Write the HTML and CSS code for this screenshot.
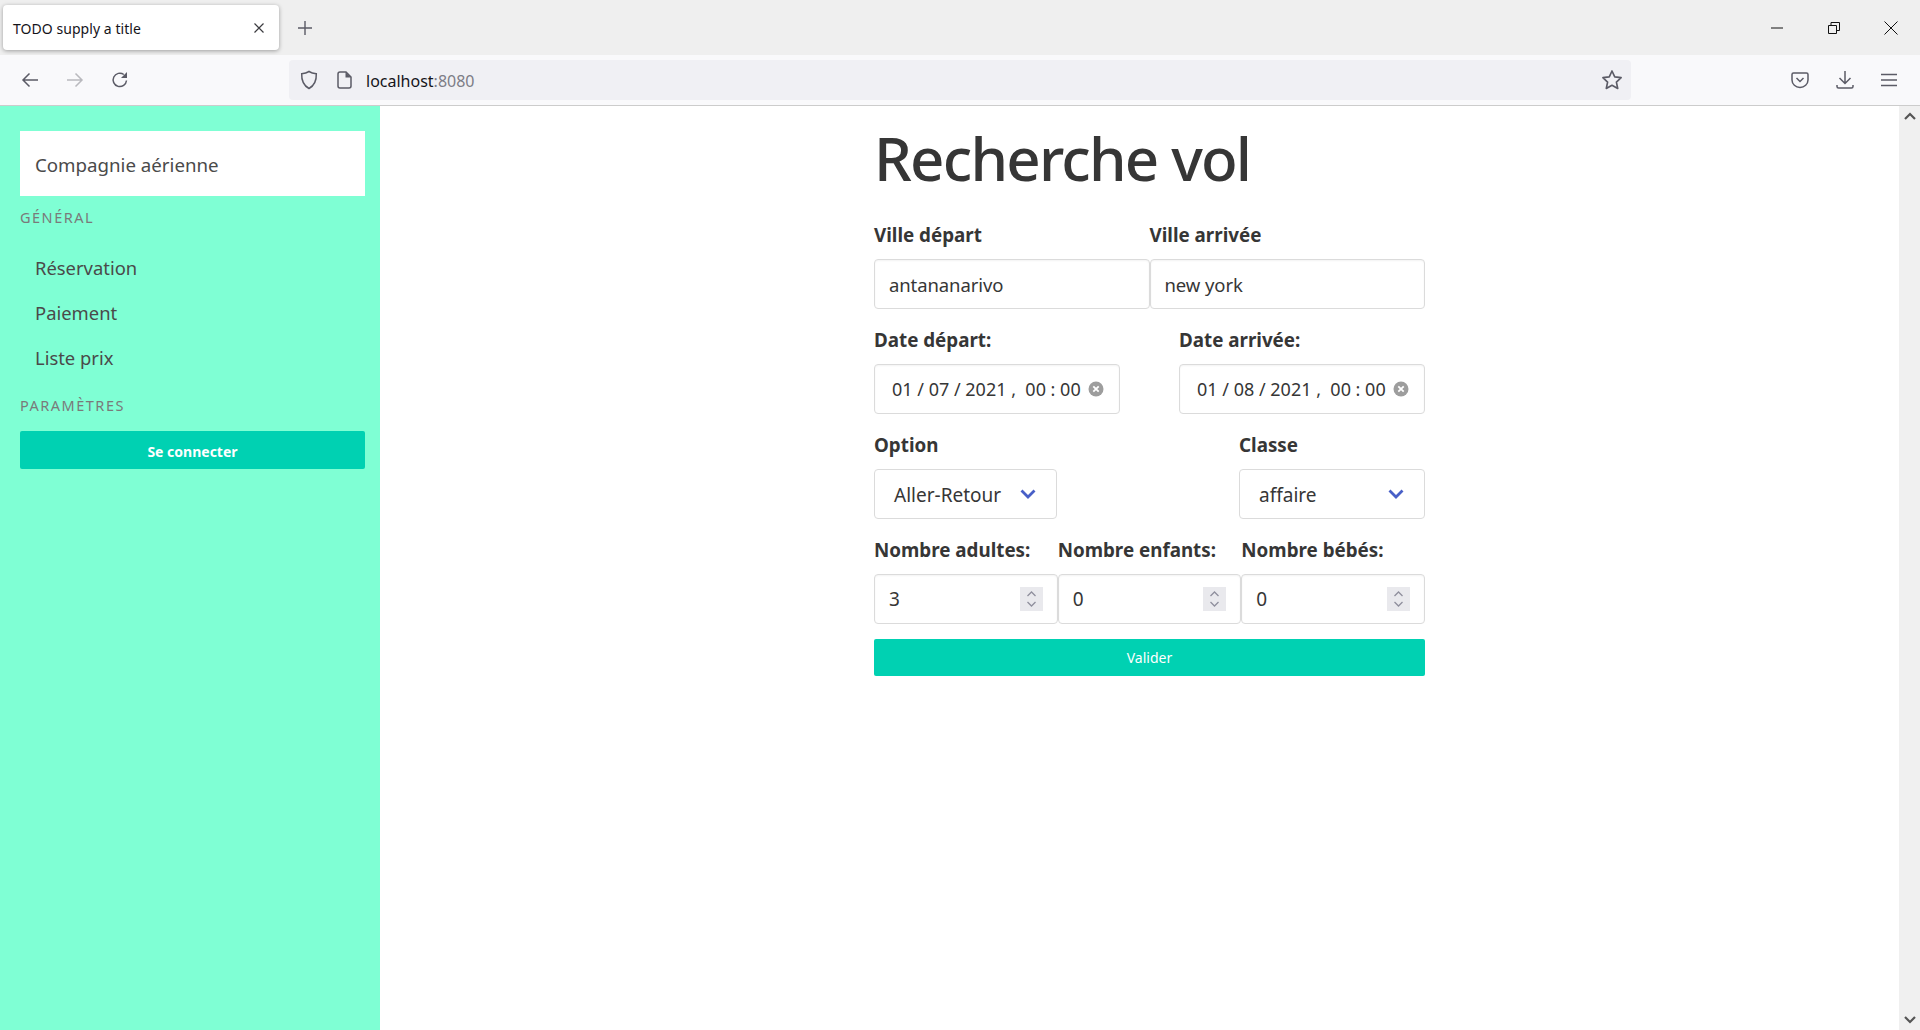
FILE: index.html
```html
<!DOCTYPE html>
<html lang="fr">
<head>
    <meta charset="UTF-8">
    <title>TODO supply a title</title>
    <link rel="stylesheet" href="styles.css">
</head>
<body>
    <div class="tabbar">
        <div class="tab">
            <span class="tab-title">TODO supply a title</span>
            <svg class="tab-close" width="12" height="12" viewBox="0 0 12 12"><path d="M1.500 1.500l9 9M10.500 1.500l-9 9" stroke="#3c3c40" stroke-width="1.200" fill="none"/></svg>
        </div>
        <svg class="new-tab" width="16" height="16" viewBox="0 0 16 16"><path d="M8 1v14M1 8h14" stroke="#5b5b66" stroke-width="1.400" fill="none"/></svg>
        <div class="win-buttons">
            <svg width="14" height="14" viewBox="0 0 14 14"><path d="M1 7h12" stroke="#111" stroke-width="1" fill="none"/></svg>
            <svg width="14" height="14" viewBox="0 0 14 14"><path d="M1.500 4.500h8v8h-8zM4 4.500V1.500h8.500v8h-3" stroke="#111" stroke-width="1" fill="none"/></svg>
            <svg width="14" height="14" viewBox="0 0 14 14"><path d="M.5.5l13 13M13.500.5l-13 13" stroke="#111" stroke-width="1" fill="none"/></svg>
        </div>
    </div>

    <div class="toolbar">
        <div class="nav-buttons">
            <svg width="18" height="16" viewBox="0 0 18 16"><path d="M17 8H2M8.500 1.500L2 8l6.500 6.500" stroke="#5b5b66" stroke-width="1.500" fill="none"/></svg>
            <svg width="18" height="16" viewBox="0 0 18 16"><path d="M1 8h15M9.500 1.500L16 8l-6.500 6.500" stroke="#b9b9be" stroke-width="1.500" fill="none"/></svg>
            <svg width="18" height="18" viewBox="0 0 18 18"><path d="M15.500 9.500A6.700 6.700 0 1 1 12.800 3.500" stroke="#5b5b66" stroke-width="1.500" fill="none"/><path d="M16 1v6h-6z" fill="#5b5b66"/></svg>
        </div>
        <div class="urlbar">
            <svg class="shield" width="18" height="20" viewBox="0 0 18 20"><path d="M9 1.500c2 1.300 4.500 2 7.300 2.200.3 6.500-2 11.800-7.300 14.800C3.700 15.500 1.400 10.200 1.700 3.700 4.500 3.500 7 2.800 9 1.500z" stroke="#5b5b66" stroke-width="1.500" fill="none"/></svg>
            <svg class="page" width="15" height="18" viewBox="0 0 15 18"><path d="M3 1h6l5 5v9a2 2 0 0 1-2 2H3a2 2 0 0 1-2-2V3a2 2 0 0 1 2-2z" stroke="#5b5b66" stroke-width="1.500" fill="none"/><path d="M8.500 1v5.500H14z" fill="#5b5b66"/></svg>
            <span class="url">localhost<span class="url-port">:8080</span></span>
            <svg class="star" width="22" height="22" viewBox="0 0 20 20"><path d="M10 1.800l2.500 5.400 5.800.7-4.300 4 1.200 5.800-5.200-2.900-5.200 2.900 1.200-5.800-4.300-4 5.800-.7z" stroke="#5b5b66" stroke-width="1.500" stroke-linejoin="round" fill="none"/></svg>
        </div>
        <div class="tool-buttons">
            <svg width="18" height="18" viewBox="0 0 18 18"><path d="M2.500 2h13A1.500 1.500 0 0 1 17 3.500V9a8 7.500 0 0 1-16 0V3.500A1.500 1.500 0 0 1 2.500 2z" stroke="#5b5b66" stroke-width="1.500" fill="none"/><path d="M5.500 7L9 10.500 12.500 7" stroke="#5b5b66" stroke-width="1.500" fill="none"/></svg>
            <svg width="18" height="20" viewBox="0 0 18 20"><path d="M9 1v12M3.500 8L9 13.500 14.500 8M1 15v1.500A1.500 1.500 0 0 0 2.500 18h13a1.500 1.500 0 0 0 1.500-1.500V15" stroke="#5b5b66" stroke-width="1.500" fill="none"/></svg>
            <svg width="16" height="14" viewBox="0 0 16 14"><path d="M0 1.500h16M0 7h16M0 12.500h16" stroke="#5b5b66" stroke-width="1.500" fill="none"/></svg>
        </div>
    </div>

    <div class="page-area">
        <aside class="sidebar">
            <div class="brand">Compagnie aérienne</div>
            <p class="menu-label menu-label-first">Général</p>
            <ul class="menu-list">
                <li>Réservation</li>
                <li>Paiement</li>
                <li>Liste prix</li>
            </ul>
            <p class="menu-label">Paramètres</p>
            <button class="btn btn-login" type="button">Se connecter</button>
        </aside>

        <main class="content">
            <form class="search-form">
                <h1 class="title">Recherche vol</h1>

                <div class="row">
                    <div class="field grow">
                        <label>Ville départ</label>
                        <input class="box text-box" type="text" value="antananarivo">
                    </div>
                    <div class="field grow">
                        <label>Ville arrivée</label>
                        <input class="box text-box" type="text" value="new york">
                    </div>
                </div>

                <div class="row spaced">
                    <div class="field date-field">
                        <label>Date départ:</label>
                        <div class="box date-box">
                            <span>01 / 07 / 2021 ,&nbsp; 00 : 00</span>
                            <svg width="16" height="16" viewBox="0 0 16 16"><circle cx="8" cy="8" r="7.500" fill="#9d9d9d"/><path d="M5.300 5.300l5.400 5.400M10.700 5.300l-5.400 5.400" stroke="#fff" stroke-width="1.800" fill="none"/></svg>
                        </div>
                    </div>
                    <div class="field date-field">
                        <label>Date arrivée:</label>
                        <div class="box date-box">
                            <span>01 / 08 / 2021 ,&nbsp; 00 : 00</span>
                            <svg width="16" height="16" viewBox="0 0 16 16"><circle cx="8" cy="8" r="7.500" fill="#9d9d9d"/><path d="M5.300 5.300l5.400 5.400M10.700 5.300l-5.400 5.400" stroke="#fff" stroke-width="1.800" fill="none"/></svg>
                        </div>
                    </div>
                </div>

                <div class="row spaced">
                    <div class="field option-field">
                        <label>Option</label>
                        <div class="box select-box">
                            <span>Aller-Retour</span>
                            <svg width="16" height="10" viewBox="0 0 16 10"><path d="M1.500 1.500L8 8l6.500-6.500" stroke="#485fc7" stroke-width="2.800" fill="none"/></svg>
                        </div>
                    </div>
                    <div class="field class-field">
                        <label>Classe</label>
                        <div class="box select-box">
                            <span>affaire</span>
                            <svg width="16" height="10" viewBox="0 0 16 10"><path d="M1.500 1.500L8 8l6.500-6.500" stroke="#485fc7" stroke-width="2.800" fill="none"/></svg>
                        </div>
                    </div>
                </div>

                <div class="row row-last">
                    <div class="field grow">
                        <label>Nombre adultes:</label>
                        <div class="box number-box">
                            <span>3</span>
                            <svg class="spin" width="23" height="24" viewBox="0 0 23 24"><rect width="23" height="24" fill="#e9e9ed"/><path d="M7.500 9l4-4 4 4M7.500 15l4 4 4-4" stroke="#8f8f9d" stroke-width="1.300" fill="none"/></svg>
                        </div>
                    </div>
                    <div class="field grow">
                        <label>Nombre enfants:</label>
                        <div class="box number-box">
                            <span>0</span>
                            <svg class="spin" width="23" height="24" viewBox="0 0 23 24"><rect width="23" height="24" fill="#e9e9ed"/><path d="M7.500 9l4-4 4 4M7.500 15l4 4 4-4" stroke="#8f8f9d" stroke-width="1.300" fill="none"/></svg>
                        </div>
                    </div>
                    <div class="field grow">
                        <label>Nombre bébés:</label>
                        <div class="box number-box">
                            <span>0</span>
                            <svg class="spin" width="23" height="24" viewBox="0 0 23 24"><rect width="23" height="24" fill="#e9e9ed"/><path d="M7.500 9l4-4 4 4M7.500 15l4 4 4-4" stroke="#8f8f9d" stroke-width="1.300" fill="none"/></svg>
                        </div>
                    </div>
                </div>

                <button class="btn btn-submit" type="button">Valider</button>
            </form>
        </main>

        <div class="scrollbar">
            <svg width="12" height="8" viewBox="0 0 12 8"><path d="M1 7l5-5 5 5" stroke="#555" stroke-width="2.200" fill="none"/></svg>
            <svg width="12" height="8" viewBox="0 0 12 8"><path d="M1 1l5 5 5-5" stroke="#555" stroke-width="2.200" fill="none"/></svg>
        </div>
    </div>
</body>
</html>
```

FILE: styles.css
```css
* {
    box-sizing: border-box;
}
html, body {
    height: 100%;
    margin: 0;
    overflow: hidden;
}
body {
    display: flex;
    flex-direction: column;
    font-family: "Noto Sans", "Open Sans", sans-serif;
    color: #363636;
    background: #fff;
}

/* browser chrome */
.tabbar {
    height: 55px;
    flex: none;
    display: flex;
    align-items: center;
    padding-left: 3px;
    background: #efefef;
}
.tab {
    width: 276px;
    height: 45px;
    display: flex;
    align-items: center;
    justify-content: space-between;
    padding: 0 14px 0 10px;
    background: #fff;
    border-radius: 4px;
    box-shadow: 0 1px 4px rgba(0, 0, 0, .35);
}
.tab-title {
    padding-top: 2px;
    font-size: 14px;
    letter-spacing: .05px;
    color: #15141a;
}
.new-tab {
    margin-left: 18px;
}
.win-buttons {
    margin-left: auto;
    display: flex;
    gap: 43px;
    padding-right: 22px;
}
.toolbar {
    height: 51px;
    flex: none;
    display: flex;
    align-items: center;
    background: #f9f9fb;
    border-bottom: 1px solid #ccc;
    padding-bottom: 1px;
}
.nav-buttons {
    width: 289px;
    display: flex;
    align-items: center;
    gap: 27px;
    padding-left: 21px;
}
.urlbar {
    width: 1342px;
    height: 40px;
    display: flex;
    align-items: center;
    padding-left: 11px;
    padding-right: 8px;
    background: #f0f0f4;
    border-radius: 4px;
}
.page {
    margin-left: 19px;
}
.url {
    margin-left: 14px;
    padding-top: 3px;
    font-size: 16px;
    color: #15141a;
}
.url-port {
    color: #7d7d86;
}
.star {
    margin-left: auto;
}
.tool-buttons {
    display: flex;
    align-items: center;
    gap: 27px;
    padding-left: 160px;
}

/* page */
.page-area {
    flex: 1;
    min-height: 0;
    display: flex;
}
.sidebar {
    width: 380px;
    flex: none;
    padding: 25px 15px 0 20px;
    background: #7fffd4;
}
.brand {
    height: 65px;
    display: flex;
    align-items: center;
    padding: 2px 0 0 15px;
    font-size: 18.700px;
    color: #4a4a4a;
    background: #fff;
}
.menu-label {
    margin: 0;
    font-size: 14.500px;
    line-height: 20px;
    letter-spacing: 1.500px;
    text-transform: uppercase;
    color: #7a7a7a;
}
.menu-label-first {
    margin-top: 11px;
}
.menu-list {
    list-style: none;
    margin: 18px 0 15px;
    padding: 0;
}
.menu-list li {
    height: 45px;
    padding-left: 15px;
    font-size: 18.400px;
    line-height: 45px;
    color: #4a4a4a;
}
.btn {
    display: block;
    width: 100%;
    border: 0;
    border-radius: 2px;
    color: #fff;
    background: #00d1b2;
    font-family: inherit;
}
.btn-login {
    height: 38px;
    margin-top: 16px;
    padding-top: 3px;
    font-size: 14px;
    font-weight: 700;
}
.content {
    flex: 1;
    min-width: 0;
}
.search-form {
    width: 551px;
    margin-left: 494px;
}
.title {
    margin: 13px 0 26px;
    height: 78px;
    font-size: 60px;
    line-height: 78px;
    font-weight: 500;
    letter-spacing: -1.800px;
    color: #363636;
}
.row {
    display: flex;
    margin-bottom: 19px;
}
.row-last {
    margin-bottom: 15px;
}
.spaced {
    justify-content: space-between;
}
.field label {
    display: block;
    height: 36px;
    font-size: 18.800px;
    line-height: 24px;
    font-weight: 700;
    color: #363636;
    white-space: nowrap;
}
.grow {
    flex: 1;
    min-width: 0;
}
.date-field {
    width: 246px;
}
.option-field {
    width: 183px;
}
.class-field {
    width: 186px;
}
.box {
    display: flex;
    align-items: center;
    width: 100%;
    height: 50px;
    border: 1px solid #dbdbdb;
    border-radius: 4px;
    background: #fff;
    box-shadow: inset 0 1px 2px rgba(10, 10, 10, .05);
    font-family: inherit;
    font-size: 19px;
    color: #363636;
    padding: 0 14px;
}
.text-box {
    font-size: 18.500px;
    letter-spacing: -.1px;
}
.date-box {
    justify-content: space-between;
    padding: 0 15px 0 17px;
    font-size: 18px;
    white-space: nowrap;
}
.select-box {
    justify-content: space-between;
    padding: 2px 20px 0 19px;
    box-shadow: none;
}
.select-box svg {
    margin-top: -2px;
}
.number-box {
    justify-content: space-between;
    padding-right: 14px;
}
.btn-submit {
    height: 37px;
    font-size: 14px;
}
.scrollbar {
    width: 21px;
    flex: none;
    display: flex;
    flex-direction: column;
    justify-content: space-between;
    align-items: center;
    padding: 6px 0;
    background: #f0f0f0;
}
```
